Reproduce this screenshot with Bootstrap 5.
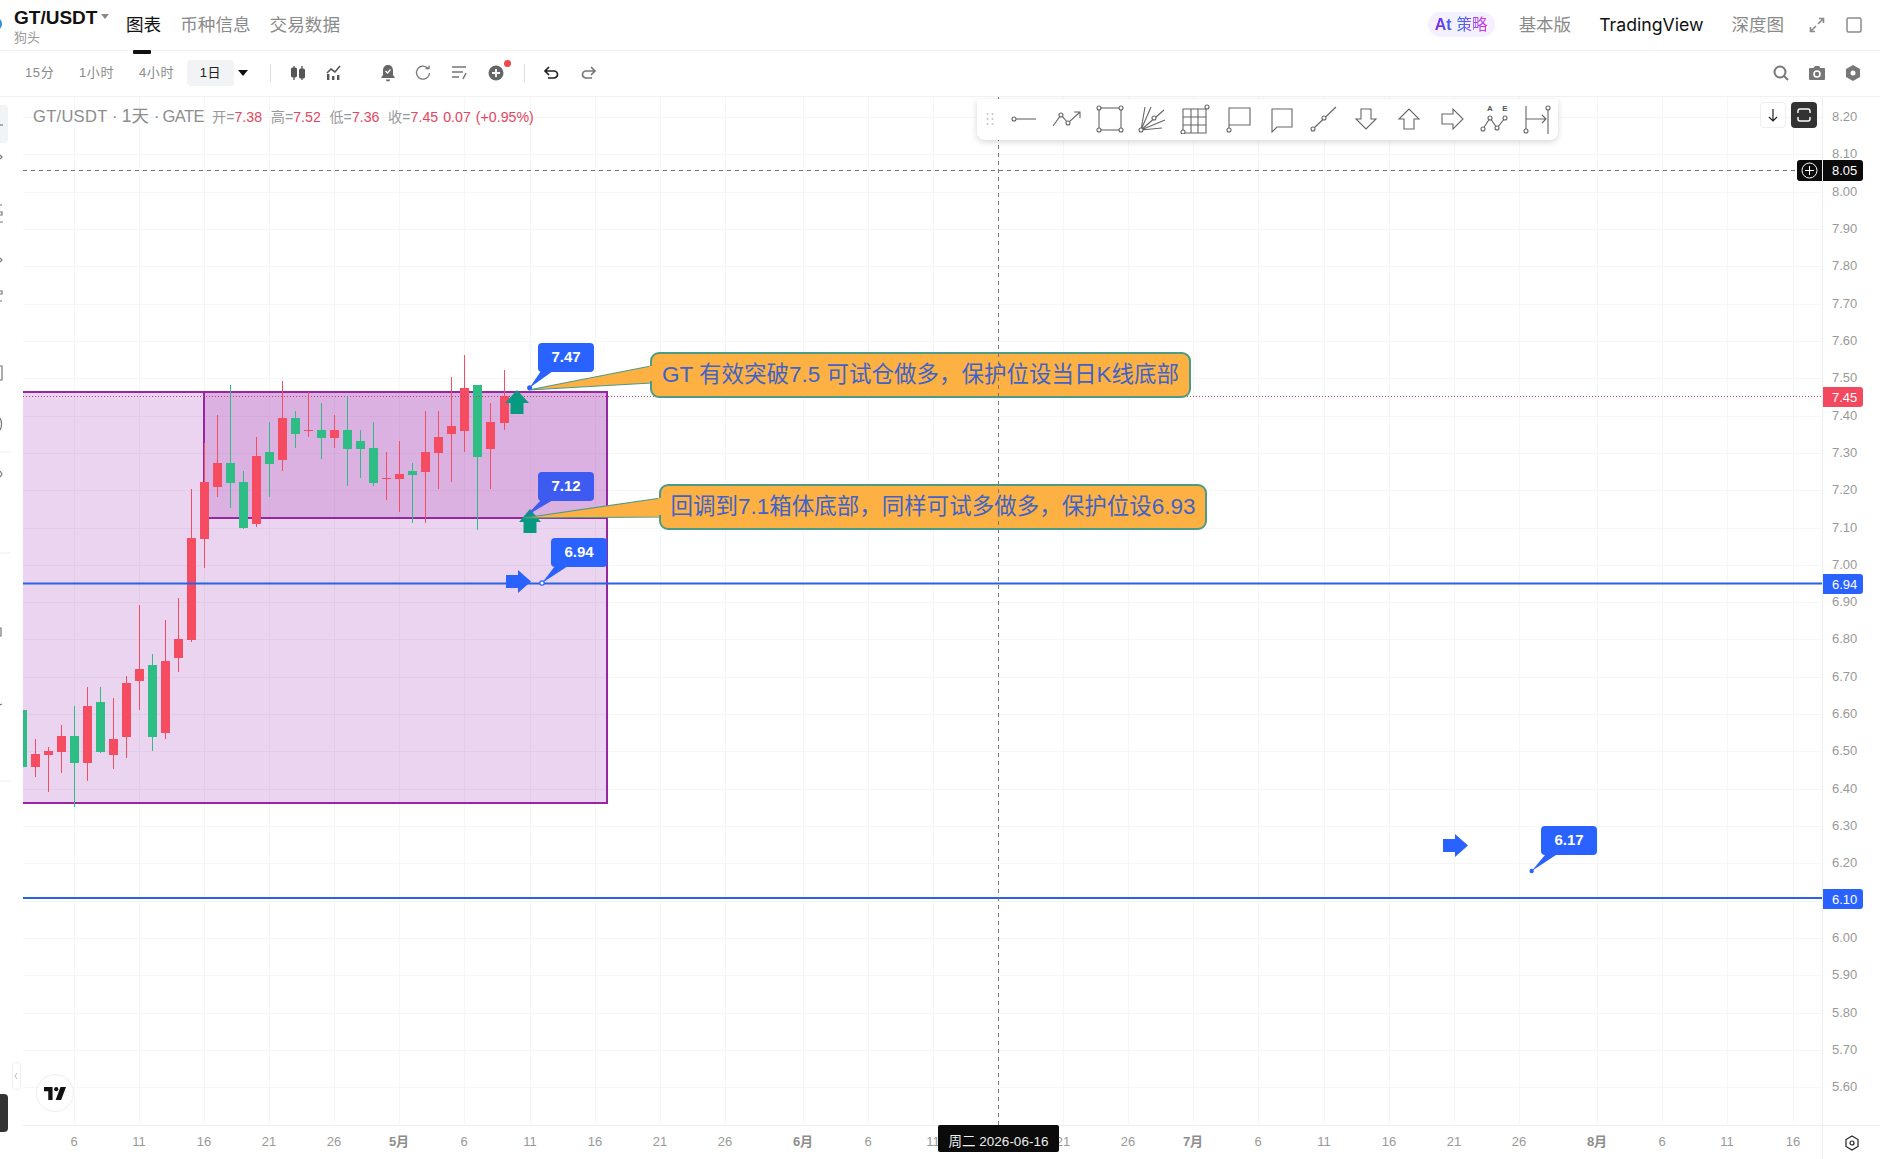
<!DOCTYPE html>
<html lang="zh">
<head>
  <meta charset="UTF-8">
  <title>GT/USDT 图表</title>
  <link rel="stylesheet" href="https://cdn.jsdelivr.net/npm/bootstrap@5.3.2/dist/css/bootstrap.min.css">
  <style>
    html, body { height: 100%; overflow: hidden; }
    body { font-family: "Liberation Sans", "Noto Sans CJK SC", sans-serif; background: #fff; color: #888; }
    .shell { height: 1159px; width: 1880px; }
    /* top bar */
    .topbar { height: 51px; border-bottom: 1px solid #f1f1f2; flex: none; position: relative; }
    .coin-dot { width: 10px; height: 12px; margin-left: -8px; margin-right: 12px; margin-top: -2px; border-radius: 50%; background: #2f8fd8; flex: none; }
    .coin-box { width: 112px; flex: none; line-height: 1; margin-top: -3px; }
    .coin-name { font-size: 19px; font-weight: 700; color: #111; line-height: 20px; margin-top: 6px; }
    .coin-name i { display: inline-block; border: 4px solid transparent; border-top: 5px solid #888; margin-left: 4px; vertical-align: 1px; }
    .coin-sub { font-size: 13px; line-height: 16px; color: #999; margin-top: 2px; }
    .tab-item { font-size: 17.6px; line-height: 24px; color: #8a8a8a; position: relative; margin-right: 19px; }
    .tab-item.on { color: #111; }
    .tab-item.on::after { content: ""; position: absolute; left: 7px; width: 18px; height: 4px; background: #111; top: 37px; border-radius: 1px; }
    .ai-pill { height: 25px; width: 67px; border-radius: 13px; background: #f4f0ff; font-size: 15.5px; gap: 5px; }
    .ai-pill b { background: linear-gradient(90deg, #8a22e6, #2f6cf0); -webkit-background-clip: text; background-clip: text; color: transparent; font-size: 16px; }
    .ai-pill span { background: linear-gradient(90deg, #2f6cf0, #e22fe0); -webkit-background-clip: text; background-clip: text; color: transparent; }
    .mode-item { font-size: 17.5px; color: #8a8a8a; }
    .mode-item.on { color: #111; font-family: "Inter", sans-serif; font-size: 17.7px; }
    /* tool row */
    .toolrow { height: 46px; border-bottom: 1px solid #f1f1f2; flex: none; font-size: 13px; color: #8a8a8a; letter-spacing: .6px; padding-bottom: 1px; }
    .iv-item { line-height: 26px; flex: none; }
    .iv-on { width: 47px; height: 26px; border-radius: 4px; background: #f2f3f5; color: #222; text-align: center; }
    .iv-caret { width: 0; height: 0; border: 5px solid transparent; border-top: 6px solid #111; border-bottom: 0; }
    .vsep { width: 1px; height: 18px; background: #ddd; flex: none; }
    .tool-ic { width: 20px; height: 20px; flex: none; display: block; }
    /* chart */
    .rail { width: 23px; flex: none; }
    .plot { position: relative; overflow: hidden; height: 1028px; width: 1799px; flex: none; }
    .plot-layer { position: absolute; left: 0; top: 0; }
    .legend-line { position: absolute; left: 10px; top: 8px; line-height: 22px; font-size: 14.2px; color: #999; white-space: nowrap; }
    .legend-line .pair { display: inline-block; width: 179px; font-size: 16.5px; color: #8d8d8d; letter-spacing: .3px; }
    .legend-line .pair b { font-weight: 400; font-size: 17.5px; letter-spacing: 0; margin-left: -1px; }
    .legend-line .pair u { text-decoration: none; font-size: 16.5px; letter-spacing: -.6px; margin-left: -2px; }
    .legend-line em { font-style: normal; color: #e5455e; margin-right: 8.6px; }
    .legend-line em.tail-val { margin-right: 5px; }
    .draw-bar { position: absolute; left: 954px; top: 2px; width: 581px; height: 41px; padding-bottom: 2px; background: #fff; border-radius: 0 0 8px 8px; box-shadow: 0 2px 6px rgba(0,0,0,.16); }
    .grip-box { width: 26px; flex: none; text-align: center; }
    .draw-ic { width: 42.75px; flex: none; text-align: center; line-height: 0; }
    .draw-ic svg { width: 30px; height: 30px; fill: none; stroke: #666; stroke-width: 1.1; }
    .draw-ic svg circle { fill: #fff; }
    .side-btn { position: absolute; top: 5px; width: 26px; height: 26px; border-radius: 4px; }
    .side-down { left: 1737px; background: #fff; border: 1px solid #eee; }
    .side-dark { left: 1768px; background: #333; }
    .note-box { position: absolute; height: 46px; background: #fdb143; border: 2px solid #4d9a87; border-radius: 9px; color: #3f63c9; font-size: 22.5px; line-height: 42px; text-align: center; white-space: nowrap; }
    /* opening in the left edge where the tail joins the box */
    .note-box::before { content: ""; position: absolute; left: -3px; width: 4px; background: #fdb143; }
    .note-a { left: 627px; top: 255px; width: 541px; }
    .note-a::before { top: 12px; height: 15px; }
    .note-b { left: 636px; top: 387px; width: 548px; }
    .note-b::before { top: 12px; height: 17px; }
    .tip-box { position: absolute; width: 56px; height: 29px; background: #2962ff; border-radius: 4px; color: #fff; font-weight: 700; font-size: 15px; line-height: 28px; text-align: center; }
    .tip-a { left: 515px; top: 246px; }
    .tip-b { left: 515px; top: 375px; background: #3d5bf0; }
    .tip-c { left: 528px; top: 441px; }
    .tip-d { left: 1518px; top: 729px; }
    .tv-badge { position: absolute; left: 13px; top: 977px; width: 38px; height: 38px; border-radius: 50%; background: #fff; border: 1px solid #eee; }
    .cross-plus { position: absolute; left: 1774px; top: 63px; width: 25px; height: 21px; background: #0b0b0b; border-radius: 3px 0 0 3px; }
    .price-axis { width: 58px; flex: none; position: relative; border-left: 1px solid #eeeff1; font-size: 13px; color: #999; }
    .price-tick { position: absolute; left: 9px; line-height: 16px; }
    .price-tag { position: absolute; left: 0; width: 40px; height: 20px; padding-left: 9px; line-height: 21px; color: #fff; border-radius: 0 3px 3px 0; }
    .tag-red { background: #f2495e; top: 290px; }
    .tag-blue { background: #2962ff; }
    .tag-black { background: #0b0b0b; top: 63px; height: 21px; line-height: 21px; }
    .time-axis { height: 34px; flex: none; border-top: 1px solid #eeeff1; position: relative; font-size: 13px; color: #999; }
    .time-tick { position: absolute; top: 7px; line-height: 18px; transform: translateX(-50%); }
    .time-tick.major { font-weight: 700; color: #8d8d8d; }
    .time-cross { position: absolute; left: 915px; top: -1px; width: 121px; height: 27px; background: #0b0b0b; color: #eee; border-radius: 2px; text-align: center; line-height: 33px; font-size: 13.5px; }
    .axis-corner { position: absolute; left: 1799px; top: 0; bottom: 0; width: 58px; border-left: 1px solid #eeeff1; }
  </style>
</head>
<body>
<div class="shell d-flex flex-column">

  <!-- top bar -->
  <div class="topbar d-flex align-items-center">
    <div class="coin-dot"></div>
    <div class="coin-box">
      <div class="coin-name">GT/USDT<i></i></div>
      <div class="coin-sub">狗头</div>
    </div>
    <div class="tab-item on">图表</div>
    <div class="tab-item">币种信息</div>
    <div class="tab-item">交易数据</div>
    <div class="ms-auto d-flex align-items-center">
      <div class="ai-pill d-flex align-items-center justify-content-center me-4"><b>At</b><span>策略</span></div>
      <div class="mode-item" style="margin-right:28px">基本版</div>
      <div class="mode-item on" style="margin-right:28px">TradingView</div>
      <div class="mode-item" style="margin-right:25px">深度图</div>
      <svg width="16" height="16" viewBox="0 0 16 16" fill="none" stroke="#8a8a8a" stroke-width="1.6" style="margin-right:21px"><path d="M9 7l5-5M10 1.5h4.5V6M7 9l-5 5M6 14.5H1.5V10"/></svg>
      <svg width="16" height="16" viewBox="0 0 16 16" fill="none" stroke="#8a8a8a" stroke-width="1.5" style="margin-right:18px"><rect x="1" y="1" width="14" height="14" rx="1.5"/></svg>
    </div>
  </div>

  <!-- interval and tools row -->
  <div class="toolrow d-flex align-items-center">
    <div class="iv-item" style="margin-left:25px;width:54px">15分</div>
    <div class="iv-item" style="width:60px">1小时</div>
    <div class="iv-item" style="width:48px">4小时</div>
    <div class="iv-item iv-on">1日</div>
    <div class="iv-caret" style="margin-left:4px;margin-right:22px"></div>
    <div class="vsep" style="margin-right:17px"></div>
    <svg class="tool-ic" viewBox="0 0 20 20" fill="#555" stroke="#555" style="margin-right:16px"><path d="M6 3v14M14 3v14" stroke-width="1.3"/><rect x="3.500" y="5" width="5" height="9" rx="1"/><rect x="11.500" y="6" width="5" height="9" rx="1"/></svg>
    <svg class="tool-ic" viewBox="0 0 20 20" fill="#555" style="margin-right:34px"><rect x="3" y="11" width="2.400" height="6"/><rect x="8" y="13" width="2.400" height="4"/><rect x="13" y="12" width="2.400" height="5"/><path d="M3 10l4-4 4 3 5-6" fill="none" stroke="#555" stroke-width="1.600"/></svg>
    <svg class="tool-ic" viewBox="0 0 20 20" fill="#666" style="margin-right:15px"><path d="M10 2c-3.400 0-5 2.500-5 5.500V12l-2 3h14l-2-3V7.500C15 4.500 13.400 2 10 2zM8 16.500a2 2 0 004 0z"/><path d="M7.500 8l2 2 3-3.500" fill="none" stroke="#fff" stroke-width="1.300"/></svg>
    <svg class="tool-ic" viewBox="0 0 20 20" fill="none" stroke="#777" stroke-width="1.300" style="margin-right:16px"><path d="M15 5.500A6.500 6.500 0 1016.500 10"/><path d="M12.500 5.500H16V2.500"/></svg>
    <svg class="tool-ic" viewBox="0 0 20 20" fill="none" stroke="#777" stroke-width="1.500" style="margin-right:17px"><path d="M3 4h14M3 9h11M3 14h7M14 16l3-6"/></svg>
    <div class="position-relative" style="width:20px;height:20px;margin-right:18px">
      <svg class="tool-ic" viewBox="0 0 20 20"><circle cx="10" cy="10" r="7.500" fill="#666"/><path d="M10 6v8M6 10h8" stroke="#fff" stroke-width="1.800"/></svg>
      <span class="position-absolute rounded-circle" style="right:-5px;top:-3px;width:7px;height:7px;background:#f0484f"></span>
    </div>
    <div class="vsep" style="margin-right:17px"></div>
    <svg class="tool-ic" viewBox="0 0 20 20" fill="none" stroke="#222" stroke-width="1.700" style="margin-right:16px"><path d="M7 4L3 8l4 4M3 8h9a3.500 3.500 0 010 7H6"/></svg>
    <svg class="tool-ic" viewBox="0 0 20 20" fill="none" stroke="#777" stroke-width="1.700"><path d="M13 4l4 4-4 4M17 8H8a3.500 3.500 0 000 7h6"/></svg>
    <div class="ms-auto d-flex align-items-center">
      <svg class="tool-ic" viewBox="0 0 20 20" fill="none" stroke="#777" stroke-width="2" style="margin-right:16px"><circle cx="9" cy="9" r="5.500"/><path d="M13 13l4 4"/></svg>
      <svg class="tool-ic" viewBox="0 0 20 20" style="margin-right:16px"><path d="M3 5h3.500L8 3h4l1.500 2H17a1 1 0 011 1v10a1 1 0 01-1 1H3a1 1 0 01-1-1V6a1 1 0 011-1z" fill="#777"/><circle cx="10" cy="11" r="3" fill="none" stroke="#fff" stroke-width="1.600"/></svg>
      <svg class="tool-ic" viewBox="0 0 20 20" style="margin-right:17px"><path d="M10 2l7 4v8l-7 4-7-4V6z" fill="#777"/><circle cx="10" cy="10" r="2.500" fill="#fff"/></svg>
    </div>
  </div>

  <div class="d-flex flex-grow-1">
    <!-- left rail, mostly scrolled out of view -->
    <svg class="rail" width="23" height="1062" viewBox="0 97 23 1062" fill="none" stroke="#777" stroke-width="1.200">
      <rect x="-6" y="105" width="14" height="38" rx="4" fill="#f2f3f5" stroke="none"/>
      <path d="M0 125h3"/>
      <path d="M0 155l2 2-2 2M0 205h2M0 212h2v3H0M0 222h3M0 258l2 2-2 2M0 291h2v3H0M0 301h2"/>
      <path d="M0 366h2v14H0"/><path d="M0 418c2 3 2 9 0 12"/>
      <path d="M0 452h11M0 553h11M0 781h11" stroke="#eee"/>
      <path d="M0 471l2 3-2 3M0 628h1v8H0M0 705l2-1"/>
      <rect x="12.500" y="1062.500" width="8" height="27" rx="3" stroke="#eee" stroke-width="1"/>
      <path d="M17 1073l-2 3 2 3" stroke="#bbb" stroke-width="1"/>
      <rect x="-6" y="1094" width="14" height="38" rx="4" fill="#333" stroke="none"/>
    </svg>

    <div class="d-flex flex-column flex-grow-1">
      <div class="d-flex">
        <div class="plot">
          <svg id="plotSvg" class="plot-layer" width="1799" height="1028" viewBox="23 97 1799 1028"></svg>

          <div class="legend-line">
            <span class="pair">GT/USDT · <b>1天</b> · <u>GATE</u></span>开=<em>7.38</em>高=<em>7.52</em>低=<em>7.36</em>收=<em class="tail-val">7.45</em><em class="tail-val">0.07</em><em>(+0.95%)</em>
          </div>

          <div class="note-box note-a">GT 有效突破7.5 可试仓做多，保护位设当日K线底部</div>
          <div class="note-box note-b">回调到7.1箱体底部，同样可试多做多，保护位设6.93</div>
          <div class="tip-box tip-a">7.47</div>
          <div class="tip-box tip-b">7.12</div>
          <div class="tip-box tip-c">6.94</div>
          <div class="tip-box tip-d">6.17</div>

          <!-- crosshair sits over the drawings -->
          <svg class="plot-layer" width="1799" height="1028" viewBox="23 97 1799 1028" fill="none" stroke="#777" stroke-width="1" stroke-dasharray="4 4">
            <path d="M23 170.500H1797"/>
            <path d="M998.500 97V1125"/>
          </svg>

          <div class="draw-bar d-flex align-items-center">
            <div class="grip-box">
              <svg width="8" height="14" viewBox="0 0 8 14" fill="#c4c4c4"><circle cx="1.500" cy="2" r="1"/><circle cx="6.500" cy="2" r="1"/><circle cx="1.500" cy="7" r="1"/><circle cx="6.500" cy="7" r="1"/><circle cx="1.500" cy="12" r="1"/><circle cx="6.500" cy="12" r="1"/></svg>
            </div>
            <div class="draw-ic"><svg viewBox="0 0 30 30"><path d="M7 15h20"/><circle cx="5" cy="15" r="2"/></svg></div>
            <div class="draw-ic"><svg viewBox="0 0 30 30"><path d="M1 22L9 11l7 8L28 8M22 8h6v6"/><circle cx="9" cy="11" r="2"/><circle cx="16" cy="19" r="2"/></svg></div>
            <div class="draw-ic"><svg viewBox="0 0 30 30"><rect x="4" y="4" width="22" height="22"/><circle cx="4" cy="4" r="2"/><circle cx="26" cy="4" r="2"/><circle cx="4" cy="26" r="2"/><circle cx="26" cy="26" r="2"/></svg></div>
            <div class="draw-ic"><svg viewBox="0 0 30 30"><path d="M3 26L7 3M3 26L13 3M3 26L26 6M3 26L27 16M3 26L24 24"/><circle cx="3" cy="26" r="2"/><circle cx="16" cy="14" r="2"/></svg></div>
            <div class="draw-ic"><svg viewBox="0 0 30 30"><path d="M3 5h23v24H3zM3 13h23M3 21h23M11 5v24M18 5v24"/><circle cx="27" cy="3" r="2"/><circle cx="3" cy="28" r="2"/></svg></div>
            <div class="draw-ic"><svg viewBox="0 0 30 30"><path d="M6 25V4h21v17H6"/><circle cx="6" cy="26" r="2"/></svg></div>
            <div class="draw-ic"><svg viewBox="0 0 30 30"><path d="M6 5h20v18H11l-5 5z"/></svg></div>
            <div class="draw-ic"><svg viewBox="0 0 30 30"><path d="M4 25L27 3"/><circle cx="4" cy="25" r="2"/><circle cx="15" cy="14" r="2"/></svg></div>
            <div class="draw-ic"><svg viewBox="0 0 30 30"><path d="M10 5h10v10h5L15 25 5 15h5z"/></svg></div>
            <div class="draw-ic"><svg viewBox="0 0 30 30"><path d="M10 25V15H5L15 5l10 10h-5v10z"/></svg></div>
            <div class="draw-ic"><svg viewBox="0 0 30 30"><path d="M5 10h11V5l10 10-10 10v-5H5z"/></svg></div>
            <div class="draw-ic"><svg viewBox="0 0 30 30"><text x="10" y="7" font-size="8" font-weight="700" fill="#555" stroke="none" text-anchor="middle">A</text><text x="25" y="7" font-size="8" font-weight="700" fill="#555" stroke="none" text-anchor="middle">E</text><path d="M3 25L10 14l7 10 8-10"/><circle cx="3" cy="25" r="2"/><circle cx="10" cy="14" r="2"/><circle cx="17" cy="24" r="2"/><circle cx="25" cy="14" r="2"/></svg></div>
            <div class="draw-ic"><svg viewBox="0 0 30 30"><path d="M4 2v24M26 6v24M4 15h20M20 11l4 4-4 4"/><circle cx="4" cy="27" r="2"/><circle cx="26" cy="4" r="2"/></svg></div>
          </div>

          <div class="side-btn side-down d-flex align-items-center justify-content-center">
            <svg width="12" height="14" viewBox="0 0 12 14" fill="none" stroke="#222" stroke-width="1.200"><path d="M6 1v12M2 9l4 4 4-4"/></svg>
          </div>
          <div class="side-btn side-dark d-flex align-items-center justify-content-center">
            <svg width="16" height="16" viewBox="0 0 16 16" fill="none" stroke="#fff" stroke-width="1.400"><path d="M2 6V4a2 2 0 012-2h8a2 2 0 012 2v2M2 10v2a2 2 0 002 2h8a2 2 0 002-2v-2"/></svg>
          </div>
          <div class="cross-plus d-flex align-items-center justify-content-center">
            <svg width="17" height="17" viewBox="0 0 17 17" fill="none" stroke="#fff" stroke-width="1"><circle cx="8.500" cy="8.500" r="7.500"/><path d="M8.500 4v9M4 8.500h9"/></svg>
          </div>
          <div class="tv-badge d-flex align-items-center justify-content-center">
            <svg width="22" height="13" viewBox="0 0 36 21" fill="#111"><path d="M14 0H0v7h7v14h7z"/><path d="M28 21L36 0h-9l-8 21z"/><circle cx="20" cy="3.500" r="3.500"/></svg>
          </div>
        </div>

        <div id="priceAxis" class="price-axis">
          <div class="price-tag tag-red">7.45</div>
          <div class="price-tag tag-blue" style="top:477px">6.94</div>
          <div class="price-tag tag-blue" style="top:792px">6.10</div>
          <div class="price-tag tag-black">8.05</div>
        </div>
      </div>

      <div id="timeAxis" class="time-axis">
        <div class="axis-corner d-flex align-items-center justify-content-center">
          <svg width="18" height="18" viewBox="0 0 18 18" fill="none" stroke="#222" stroke-width="1.200"><path d="M9 2l6 3.500v7L9 16l-6-3.500v-7z"/><circle cx="9" cy="9" r="2"/></svg>
        </div>
        <div class="time-cross">周二 2026-06-16</div>
      </div>
    </div>
  </div>
</div>

<script>
  var NS = 'http://www.w3.org/2000/svg';
  var svg = document.getElementById('plotSvg');
  var priceAxis = document.getElementById('priceAxis');
  var timeAxis = document.getElementById('timeAxis');

  function add(tag, attrs) {
    var el = document.createElementNS(NS, tag);
    for (var k in attrs) el.setAttribute(k, attrs[k]);
    svg.appendChild(el);
    return el;
  }

  // time axis labels and vertical grid, x in page pixels
  var ticks = [[74,'6'],[139,'11'],[204,'16'],[269,'21'],[334,'26'],[399,'5月',1],[464,'6'],[530,'11'],[595,'16'],[660,'21'],[725,'26'],[803,'6月',1],[868,'6'],[933,'11'],[998,''],[1063,'21'],[1128,'26'],[1193,'7月',1],[1258,'6'],[1324,'11'],[1389,'16'],[1454,'21'],[1519,'26'],[1597,'8月',1],[1662,'6'],[1727,'11'],[1793,'16']];
  ticks.forEach(function(t) {
    add('path', {d: 'M' + (t[0] + .5) + ' 97V1125', stroke: '#f5f6f7', 'stroke-width': 1});
    if (!t[1]) return;
    var d = document.createElement('div');
    d.className = 'time-tick' + (t[2] ? ' major' : '');
    d.style.left = (t[0] - 23) + 'px';
    d.textContent = t[1];
    timeAxis.insertBefore(d, timeAxis.firstChild);
  });

  // price axis labels and horizontal grid: 8.20 at y=117, 373.2px per 1.00
  for (var i = 0; i <= 26; i++) {
    var y = 117 + i * 37.32;
    add('path', {d: 'M23 ' + (Math.round(y) + .5) + 'H1822', stroke: '#f5f6f7', 'stroke-width': 1});
    var lab = document.createElement('div');
    lab.className = 'price-tick';
    lab.style.top = (y - 97 - 8) + 'px';
    lab.textContent = (8.2 - i * .1).toFixed(2);
    priceAxis.insertBefore(lab, priceAxis.firstChild);
  }

  // boxes
  add('rect', {x: 22, y: 392, width: 585, height: 411, fill: 'rgba(156,39,176,.2)', stroke: '#9527a3', 'stroke-width': 2});
  add('rect', {x: 204, y: 392, width: 403, height: 126, fill: 'rgba(156,39,176,.2)', stroke: '#9527a3', 'stroke-width': 2});

  // candles: [red?, x, wickTop, bodyTop, bodyBottom, wickBottom]
  var candles = [
    [0,22,0,710,767,767],[1,35,739,754,767,777],[1,48,747,751,755,792],[1,61,725,736,752,773],
    [0,74,706,736,763,807],[1,87,687,706,763,781],[0,100,687,702,752,753],[1,113,698,739,755,769],
    [1,126,676,683,737,758],[1,139,605,669,681,710],[0,152,654,665,737,751],[1,165,620,661,733,739],
    [1,178,598,639,658,672],[1,191,489,538,640,642],[1,204,443,482,539,568],[1,217,415,463,487,497],
    [0,230,385,463,483,508],[0,243,471,482,528,529],[1,256,437,456,524,527],[0,269,422,452,464,497],
    [1,282,381,418,460,471],[0,295,411,418,434,448],[1,308,392,430,431,437],[0,321,403,430,438,459],
    [1,334,415,430,438,448],[0,347,397,430,449,486],[0,360,430,441,449,478],[0,373,422,448,483,486],
    [1,386,452,478,479,500],[1,399,441,474,479,512],[0,412,463,471,475,523],[1,425,411,452,472,523],
    [1,438,411,437,453,489],[1,451,377,426,434,482],[1,464,355,388,431,452],[0,477,385,385,457,530],
    [1,490,403,422,449,489],[1,504,370,396,423,430]
  ];
  candles.forEach(function(c) {
    var col = c[0] ? '#f64c62' : '#2ebd85';
    if (c[2]) add('rect', {x: c[1], y: c[2], width: 1, height: c[5] - c[2], fill: col});
    add('rect', {x: c[1] - 4, y: c[3], width: 9, height: Math.max(c[4] - c[3], 1), fill: col});
  });

  // horizontal lines
  add('path', {d: 'M23 396.500H1822', stroke: '#c2407a', 'stroke-width': 1, 'stroke-dasharray': '1 2'});
  add('path', {d: 'M23 583.500H1822', stroke: '#2962e8', 'stroke-width': 2});
  add('path', {d: 'M23 898H1822', stroke: '#2962e8', 'stroke-width': 2});

  // arrows
  var teal = '#089981', blue = '#2962ff';
  add('path', {d: 'M517 390L529 403H523.500V414H510.500V403H505z', fill: teal});
  add('path', {d: 'M530 509L541 522H536.500V533H523.500V522H519z', fill: teal});
  add('path', {d: 'M506 575H518V570L531 581.500L518 593V588H506z', fill: blue});
  add('path', {d: 'M1443 839H1455V834L1468 845.500L1455 857V852H1443z', fill: blue});

  // callout tails
  add('path', {d: 'M651 366L528.500 390L651 383z', fill: '#fdb143', stroke: '#4d9a87', 'stroke-width': 1.200});
  add('path', {d: 'M661 498L523.500 518L661 517z', fill: '#fdb143', stroke: '#4d9a87', 'stroke-width': 1.200});

  // blue tip pointers
  add('path', {d: 'M541 371L529.600 387.700L553 371z', fill: blue});
  add('circle', {cx: 529.600, cy: 387.700, r: 2.500, fill: blue});
  add('path', {d: 'M541 500L526 516L553 500z', fill: '#3d5bf0'});
  add('path', {d: 'M555 566L542 583L568 566z', fill: blue});
  add('circle', {cx: 542, cy: 583, r: 2.200, fill: '#fff', stroke: blue, 'stroke-width': 1.200});
  add('path', {d: 'M1545 855L1531.700 871L1556 855z', fill: blue});
  add('circle', {cx: 1531.700, cy: 871, r: 2.200, fill: blue});
</script>
<script src="https://cdn.jsdelivr.net/npm/bootstrap@5.3.2/dist/js/bootstrap.bundle.min.js"></script>
</body>
</html>
